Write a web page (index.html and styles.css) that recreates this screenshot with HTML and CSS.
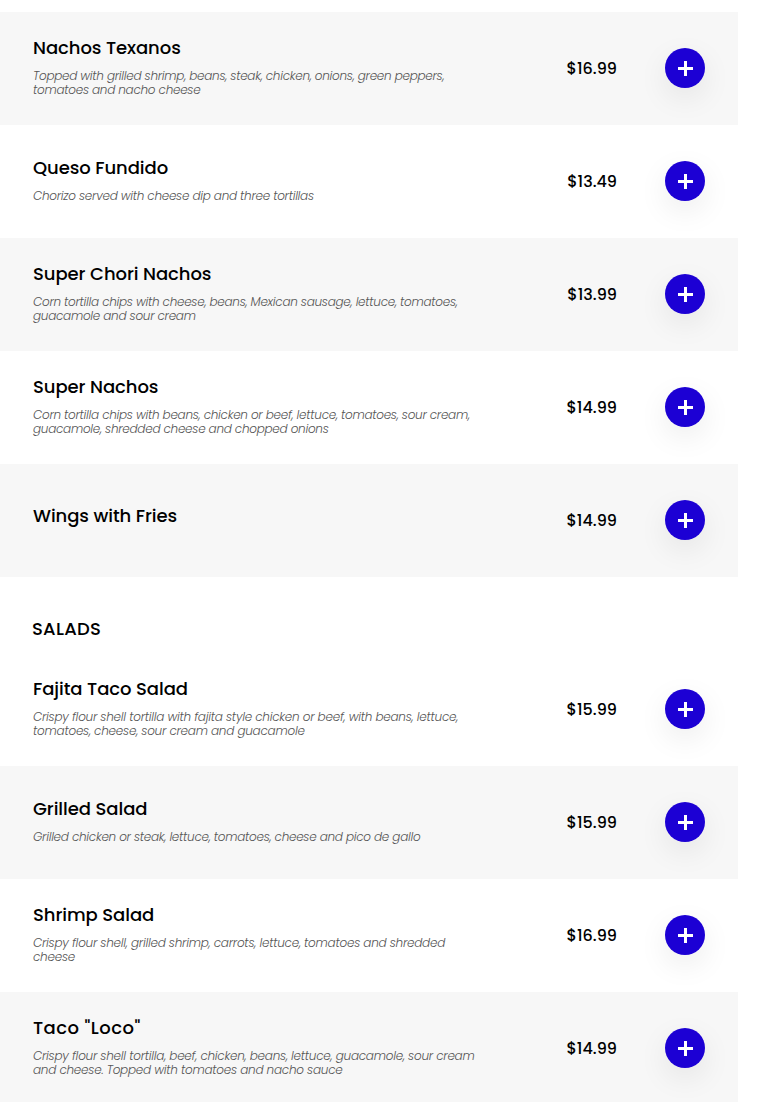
FILE: index.html
```
<!DOCTYPE html>
<html>
    <head>
        <meta charset="utf-8">
        <title>Menu</title>
        <link rel="stylesheet" href="styles.css">
    </head>
    <body>

    <div class="menu">
        <div class="item shaded">
            <div class="info">
                <h3>Nachos Texanos</h3>
                <p>Topped with grilled shrimp, beans, steak, chicken, onions, green peppers,<br>tomatoes and nacho cheese</p>
            </div>
            <span class="price">$16.99</span>
            <button class="add" aria-label="Add"><svg width="15" height="15"><path d="M0 7.5h15M7.5 0v15"/></svg></button>
        </div>
        <div class="item">
            <div class="info">
                <h3>Queso Fundido</h3>
                <p>Chorizo served with cheese dip and three tortillas</p>
            </div>
            <span class="price">$13.49</span>
            <button class="add" aria-label="Add"><svg width="15" height="15"><path d="M0 7.5h15M7.5 0v15"/></svg></button>
        </div>
        <div class="item shaded">
            <div class="info">
                <h3>Super Chori Nachos</h3>
                <p>Corn tortilla chips with cheese, beans, Mexican sausage, lettuce, tomatoes,<br>guacamole and sour cream</p>
            </div>
            <span class="price">$13.99</span>
            <button class="add" aria-label="Add"><svg width="15" height="15"><path d="M0 7.5h15M7.5 0v15"/></svg></button>
        </div>
        <div class="item">
            <div class="info">
                <h3>Super Nachos</h3>
                <p>Corn tortilla chips with beans, chicken or beef, lettuce, tomatoes, sour cream,<br>guacamole, shredded cheese and chopped onions</p>
            </div>
            <span class="price">$14.99</span>
            <button class="add" aria-label="Add"><svg width="15" height="15"><path d="M0 7.5h15M7.5 0v15"/></svg></button>
        </div>
        <div class="item shaded">
            <div class="info">
                <h3>Wings with Fries</h3>
            </div>
            <span class="price">$14.99</span>
            <button class="add" aria-label="Add"><svg width="15" height="15"><path d="M0 7.5h15M7.5 0v15"/></svg></button>
        </div>

        <h2>SALADS</h2>

        <div class="item">
            <div class="info">
                <h3>Fajita Taco Salad</h3>
                <p class="loose">Crispy flour shell tortilla with fajita style chicken or beef, with beans, lettuce,<br>tomatoes, cheese, sour cream and guacamole</p>
            </div>
            <span class="price">$15.99</span>
            <button class="add" aria-label="Add"><svg width="15" height="15"><path d="M0 7.5h15M7.5 0v15"/></svg></button>
        </div>
        <div class="item shaded">
            <div class="info">
                <h3>Grilled Salad</h3>
                <p>Grilled chicken or steak, lettuce, tomatoes, cheese and pico de gallo</p>
            </div>
            <span class="price">$15.99</span>
            <button class="add" aria-label="Add"><svg width="15" height="15"><path d="M0 7.5h15M7.5 0v15"/></svg></button>
        </div>
        <div class="item">
            <div class="info">
                <h3>Shrimp Salad</h3>
                <p class="loose">Crispy flour shell, grilled shrimp, carrots, lettuce, tomatoes and shredded<br>cheese</p>
            </div>
            <span class="price">$16.99</span>
            <button class="add" aria-label="Add"><svg width="15" height="15"><path d="M0 7.5h15M7.5 0v15"/></svg></button>
        </div>
        <div class="item shaded">
            <div class="info">
                <h3 class="quoted">Taco "Loco"</h3>
                <p class="loose">Crispy flour shell tortilla, beef, chicken, beans, lettuce, guacamole, sour cream<br>and cheese. Topped with tomatoes and nacho sauce</p>
            </div>
            <span class="price">$14.99</span>
            <button class="add" aria-label="Add"><svg width="15" height="15"><path d="M0 7.5h15M7.5 0v15"/></svg></button>
        </div>
    </div>

    </body>
</html>
```
FILE: styles.css
```
body, html {
    height: 100%;
    margin: 0;
    padding: 0;
    overflow: hidden;
    background: #fff;
    color: #000;
    font-family: Poppins, Inter, sans-serif;
}
.menu {
    width: 738px;
    padding-top: 12px;
}
h2 {
    margin: 0;
    height: 76px;
    box-sizing: border-box;
    padding: 38px 0 0 32px;
    font-size: 18px;
    line-height: 27px;
    font-weight: 500;
    letter-spacing: .25px;
}
.item {
    display: flex;
    align-items: center;
    height: 113px;
    box-sizing: border-box;
    padding: 0 33px;
}
.shaded {
    background: #f7f7f7;
}
.info {
    flex: 1;
    white-space: nowrap;
    padding-bottom: 2px;
}
h3 {
    margin: 0 0 8px;
    font-size: 18px;
    line-height: 27px;
    font-weight: 500;
    letter-spacing: -.07px;
}
h3.quoted {
    letter-spacing: .45px;
}
.info p {
    margin: 0;
    padding-bottom: 5px;
    font-size: 12px;
    line-height: 14px;
    font-style: italic;
    font-weight: 300;
    letter-spacing: -.27px;
    color: #555;
}
.info p.loose {
    letter-spacing: -.24px;
}
.price {
    margin-right: 48px;
    font-size: 16px;
    font-weight: 500;
}
.add {
    display: flex;
    align-items: center;
    justify-content: center;
    width: 40px;
    height: 40px;
    margin-bottom: 1px;
    padding: 1px 0 0 1px;
    border: none;
    border-radius: 50%;
    background: #1c00d4;
    box-shadow: 0 10px 30px rgba(0, 0, 0, .08);
    cursor: pointer;
}
.add path {
    stroke: #fff;
    stroke-width: 3;
}
```
